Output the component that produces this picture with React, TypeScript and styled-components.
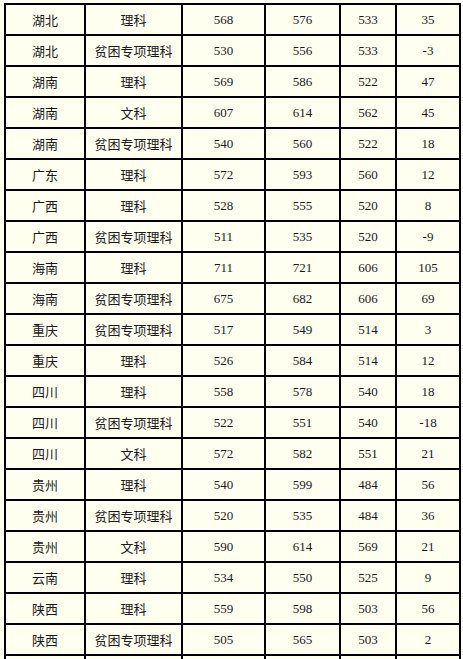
import React from 'react';
import styled, { createGlobalStyle } from 'styled-components';

type Row = [string, string, number, number, number, number];

const rows: Row[] = [
  ['湖北', '理科', 568, 576, 533, 35],
  ['湖北', '贫困专项理科', 530, 556, 533, -3],
  ['湖南', '理科', 569, 586, 522, 47],
  ['湖南', '文科', 607, 614, 562, 45],
  ['湖南', '贫困专项理科', 540, 560, 522, 18],
  ['广东', '理科', 572, 593, 560, 12],
  ['广西', '理科', 528, 555, 520, 8],
  ['广西', '贫困专项理科', 511, 535, 520, -9],
  ['海南', '理科', 711, 721, 606, 105],
  ['海南', '贫困专项理科', 675, 682, 606, 69],
  ['重庆', '贫困专项理科', 517, 549, 514, 3],
  ['重庆', '理科', 526, 584, 514, 12],
  ['四川', '理科', 558, 578, 540, 18],
  ['四川', '贫困专项理科', 522, 551, 540, -18],
  ['四川', '文科', 572, 582, 551, 21],
  ['贵州', '理科', 540, 599, 484, 56],
  ['贵州', '贫困专项理科', 520, 535, 484, 36],
  ['贵州', '文科', 590, 614, 569, 21],
  ['云南', '理科', 534, 550, 525, 9],
  ['陕西', '理科', 559, 598, 503, 56],
  ['陕西', '贫困专项理科', 505, 565, 503, 2],
];

const GlobalStyle = createGlobalStyle`
  html, body {
    margin: 0;
    padding: 0;
    background: #ffffff;
    overflow: hidden;
  }
`;

const Page = styled.div`
  width: 457px;
  height: 659px;
  padding: 3px 0 0 4px;
  background: #fffff0;
  overflow: hidden;
`;

const Table = styled.div`
  display: grid;
  grid-template-columns: 78px 95px 81px 73px 54px 62px;
  grid-auto-rows: 29px;
  gap: 2px;
  padding: 2px;
  width: max-content;
  background: #000000;
`;

const Cell = styled.div<{ $num?: boolean }>`
  display: flex;
  align-items: center;
  justify-content: center;
  background: #fffff0;
  color: #1a1a1a;
  font-family: ${(p) => (p.$num ? '"Liberation Serif", "Times New Roman", serif' : '"Noto Sans CJK SC", sans-serif')};
  font-size: 13px;
  line-height: 1;
  white-space: nowrap;
`;

const App: React.FC = () => (
  <>
    <GlobalStyle />
    <Page>
      <Table>
        {rows.map((r, i) => (
          <React.Fragment key={i}>
            <Cell>{r[0]}</Cell>
            <Cell>{r[1]}</Cell>
            <Cell $num>{r[2]}</Cell>
            <Cell $num>{r[3]}</Cell>
            <Cell $num>{r[4]}</Cell>
            <Cell $num>{r[5]}</Cell>
          </React.Fragment>
        ))}
        {/* next row, cut off by the bottom of the picture */}
        {Array.from({ length: 6 }, (_, i) => (
          <Cell key={`tail-${i}`} />
        ))}
      </Table>
    </Page>
  </>
);

export default App;
